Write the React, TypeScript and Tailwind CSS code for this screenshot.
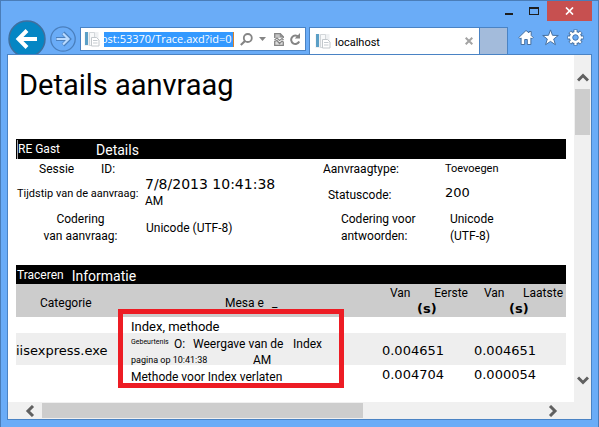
import React from "react";

function PageIcon() {
  return (
    <svg width="16" height="16" viewBox="0 0 16 16" className="shrink-0" aria-hidden="true">
      <rect x="0.5" y="1" width="14" height="14" fill="#eef0f2" />
      <rect x="1" y="1" width="3" height="13" fill="#5b9fc6" />
      <path d="M5.5 1.5h5v13h-5z" fill="#f8f9fa" stroke="#d3d7da" />
      <path d="M7.500 6.500h5l2.500 2.500v6h-7.500z" fill="#fff" stroke="#c3c8cc" />
      <path d="M9 9.500h4.500M9 12h4.500" stroke="#c5cbd0" />
    </svg>
  );
}

function Chevron({ turn }: { turn: "up" | "down" | "left" | "right" }) {
  const d = {
    up: "M1 9.500 6 4.500 11 9.500",
    down: "M1 3.500 6 8.500 11 3.500",
    left: "M9 1 4 6 9 11",
    right: "M3 1 8 6 3 11",
  }[turn];
  return (
    <svg width="12" height="12" viewBox="0 0 12 12" fill="none" stroke="#606060" strokeWidth="3" aria-hidden="true">
      <path d={d} />
    </svg>
  );
}

function TitleBar() {
  return (
    <div className="flex h-5 justify-end pr-1.5">
      <button aria-label="Minimaliseren" className="flex w-5 items-end justify-end pb-1.5">
        <span className="h-0.5 w-2 bg-[#1e1e1e]" />
      </button>
      <button aria-label="Maximaliseren" className="flex w-[34px] items-center justify-end pr-2">
        <span className="h-2 w-2.5 border border-t-2 border-[#1e1e1e]" />
      </button>
      <button aria-label="Sluiten" className="flex w-[45px] items-center justify-center bg-[#c75050]">
        <svg width="9" height="8" viewBox="0 0 9 8" stroke="#fff" strokeWidth="1.700" aria-hidden="true">
          <path d="M1 0.500 8 7.500M8 0.500 1 7.500" />
        </svg>
      </button>
    </div>
  );
}

function NavBar() {
  return (
    <div className="flex h-8 items-start">
      <div className="flex h-9 shrink-0 items-center gap-1 pl-[7px]">
        <button aria-label="Terug">
          <svg width="38" height="38" viewBox="0 0 38 38" fill="none" aria-hidden="true">
            <circle cx="19" cy="19" r="18" fill="#0586c4" stroke="#3f6f9e" strokeWidth="1.500" />
            <path d="M10 19h19" stroke="#fff" strokeWidth="4" />
            <path d="M19 10.500 10.500 19l8.500 8.500" stroke="#fff" strokeWidth="4" />
          </svg>
        </button>
        <button aria-label="Vooruit">
          <svg width="26" height="26" viewBox="0 0 26 26" fill="none" aria-hidden="true">
            <circle cx="13" cy="13" r="12.200" stroke="#4a7fbd" strokeWidth="1.300" />
            <path d="M6 13h12M13 7l6 6-6 6" stroke="#4a7fbd" strokeWidth="4" />
            <path d="M6.500 13h11.500M13 7.500l5.500 5.500-5.500 5.500" stroke="#b9daff" strokeWidth="2.200" />
          </svg>
        </button>
      </div>
      <div className="ml-1 mt-1.5 flex h-6 w-[226px] shrink-0 items-center border border-[#4a83c4] bg-white pl-[3px]">
        <PageIcon />
        <input
          aria-label="Adres"
          readOnly
          value="ost:53370/Trace.axd?id=0"
          className="ml-1 h-[15px] w-[130px] border-r border-[#d9822b] bg-[#3399ff] -indent-[3px] font-['Open_Sans',sans-serif] text-[11px] text-white outline-none"
        />
        <button aria-label="Zoeken" className="ml-1.5">
          <svg width="13" height="13" viewBox="0 0 13 13" fill="none" stroke="#858585" aria-hidden="true">
            <circle cx="7.800" cy="5" r="4" strokeWidth="1.800" />
            <path d="M5 8 0.800 12" strokeWidth="2.200" />
          </svg>
        </button>
        <button aria-label="Adressen tonen" className="ml-1.5">
          <svg width="7" height="4" viewBox="0 0 7 4" fill="#858585" aria-hidden="true">
            <path d="M0 0h7L3.500 4z" />
          </svg>
        </button>
        <button aria-label="Compatibiliteit" className="ml-2">
          <svg width="10" height="13" viewBox="0 0 10 13" fill="none" stroke="#858585" aria-hidden="true">
            <path d="M0.700 5V0.700h5.600l3 3V5" fill="#c4c4c4" strokeWidth="1.300" />
            <path d="M6.300 0.700v3h3" />
            <path d="M0.500 7 3 5l2.500 2.500L8 5.500l1.500 1.500" strokeWidth="1.300" />
            <path d="M0.700 8.500v3.800h8.600V9L8 8 5.500 10.500 3 7.500z" fill="#ddd" strokeWidth="1.300" />
          </svg>
        </button>
        <button aria-label="Vernieuwen" className="ml-1.5">
          <svg width="11" height="13" viewBox="0 0 11 13" fill="none" stroke="#858585" aria-hidden="true">
            <path d="M8.500 4A4.200 4.200 0 1 0 9.200 8.500" strokeWidth="2" />
            <path d="M10 0v5.500H4.800z" fill="#858585" stroke="none" />
          </svg>
        </button>
      </div>
      <div className="ml-[3px] mt-1.5 flex h-[27px] min-w-0 flex-1 items-center border border-b-0 border-[#4a83c4] bg-white pl-[5px] pr-1.5">
        <PageIcon />
        <span className="ml-1 mt-1 flex-1 text-[11px]">localhost</span>
        <button aria-label="Tabblad sluiten">
          <svg width="8" height="8" viewBox="0 0 8 8" stroke="#a3a3a3" strokeWidth="2" aria-hidden="true">
            <path d="M0.700 0.700 7.300 7.300M7.300 0.700 0.700 7.300" />
          </svg>
        </button>
      </div>
      <button aria-label="Nieuw tabblad" className="mt-1.5 h-[27px] w-7 border border-b-0 border-l-0 border-[#4a83c4] bg-[#a3bbdb]" />
      <div className="mt-2 flex w-[90px] shrink-0 items-center gap-2 pl-2.5">
        <button aria-label="Startpagina">
          <svg width="16" height="17" viewBox="0 0 16 17" fill="#fff" stroke="#456f9f" strokeWidth="1" aria-hidden="true">
            <path d="M8 1.500 0.800 8.500l1.300 1.300 1-.9V15.500h3.600v-5h2.600v5h3.600V8.900l1 .9 1.300-1.300-2-2V2.500h-2.200v1.300z" />
          </svg>
        </button>
        <button aria-label="Favorieten">
          <svg width="17" height="17" viewBox="0 0 17 17" fill="#fff" stroke="#456f9f" strokeWidth="1" aria-hidden="true">
            <path d="M8.500 0.900 10.500 6.300l5.800.2-4.600 3.500 1.700 5.700-4.900-3.300-4.900 3.300 1.700-5.700L.7 6.500l5.800-.2z" />
          </svg>
        </button>
        <button aria-label="Extra">
          <svg width="17" height="17" viewBox="0 0 17 17" fill="none" aria-hidden="true">
            <g stroke="#456f9f" strokeWidth="4">
              <path d="M8.500.5v16M.5 8.500h16M2.800 2.800l11.400 11.400M14.200 2.800 2.800 14.200" />
              <circle cx="8.500" cy="8.500" r="4.300" strokeWidth="4.500" />
            </g>
            <g stroke="#fff" strokeWidth="2.200">
              <path d="M8.500 1v3M8.500 13v3M1 8.500h3M13 8.500h3M3.200 3.200l2 2M11.800 11.800l2 2M13.800 3.200l-2 2M5.200 11.800l-2 2" />
            </g>
            <circle cx="8.500" cy="8.500" r="4.300" fill="#6aacf7" stroke="#fff" strokeWidth="2.600" />
            <circle cx="8.500" cy="8.500" r="2.700" fill="#6aacf7" stroke="#456f9f" strokeWidth="0.800" />
          </svg>
        </button>
      </div>
    </div>
  );
}

const mono = "font-['DejaVu_Sans',sans-serif] text-[13px]";

function RequestDetails() {
  return (
    <table className="mt-9 w-full table-fixed border-collapse text-left leading-[17px]">
      <colgroup>
        <col className="w-[129px]" />
        <col />
        <col className="w-[122px]" />
        <col className="w-[121px]" />
      </colgroup>
      <thead>
        <tr className="h-5 bg-black text-white">
          <th colSpan={4} className="p-0 pl-px font-normal">
            <div className="flex items-center gap-9 border-l border-[#aaaaaa]">
              <span>RE Gast</span>
              <span className="pt-0.5 text-[14px]">Details</span>
            </div>
          </th>
        </tr>
      </thead>
      <tbody className="align-top">
        <tr className="h-[17px]">
          <th className="p-0 pl-[23px] pt-[3px] font-normal leading-[14px]">
            <span className="inline-block w-[62px]">Sessie</span>
            <span>ID:</span>
          </th>
          <td />
          <th className="p-0 pt-[3px] font-normal leading-[14px]">Aanvraagtype:</th>
          <td className="p-0 pt-[3px] text-[11px] leading-[14px]">Toevoegen</td>
        </tr>
        <tr className="h-[35px]">
          <th className="whitespace-nowrap p-0 pl-px align-middle text-[11px] font-normal">Tijdstip van de aanvraag:</th>
          <td className="p-0">
            <div className="font-['DejaVu_Sans',sans-serif] text-[14px]">7/8/2013 10:41:38</div>
            <div>AM</div>
          </td>
          <th className="p-0 pl-[5px] pt-1 align-middle font-normal">Statuscode:</th>
          <td className={"p-0 pt-2 " + mono}>200</td>
        </tr>
        <tr className="h-[34px]">
          <th className="p-0 text-center font-normal">
            Codering
            <br />
            van aanvraag:
          </th>
          <td className="p-0 pl-px align-middle">Unicode (UTF-8)</td>
          <th className="p-0 pl-[18px] font-normal">
            Codering voor
            <br />
            antwoorden:
          </th>
          <td className="p-0 pl-[5px]">
            Unicode
            <br />
            (UTF-8)
          </td>
        </tr>
      </tbody>
    </table>
  );
}

function TraceInformation() {
  return (
    <div className="relative mt-5">
      <table className="w-full table-fixed border-collapse whitespace-nowrap text-left leading-4">
        <colgroup>
          <col className="w-[115px]" />
          <col />
          <col className="w-[92px]" />
          <col className="w-[92px]" />
        </colgroup>
        <thead>
          <tr className="h-[19px] bg-black text-white">
            <th colSpan={4} className="p-0 pl-px font-normal">
              <div className="flex items-center gap-2">
                <span>Traceren</span>
                <span className="pt-0.5 text-[14px]">Informatie</span>
              </div>
            </th>
          </tr>
          <tr className="h-[33px] bg-[#cccccc]">
            <th className="p-0 pl-6 pt-1 font-normal">Categorie</th>
            <th className="p-0 pl-[94px] pt-1 font-normal">
              <span className="inline-block w-[47px]">Mesa e</span>
              <span>_</span>
            </th>
            <th className="p-0 font-normal">
              <div className="flex justify-between pl-2 pr-1.5 pt-0.5 leading-[15px]">
                <span>Van</span>
                <span>Eerste</span>
              </div>
              <div className={"pl-[35px] font-bold " + mono}>(s)</div>
            </th>
            <th className="p-0 font-normal">
              <div className="flex justify-between pl-2.5 pr-[3px] pt-0.5 leading-[15px]">
                <span>Van</span>
                <span>Laatste</span>
              </div>
              <div className={"pl-[35px] font-bold " + mono}>(s)</div>
            </th>
          </tr>
        </thead>
        <tbody>
          <tr className="h-4">
            <td />
            <td className="p-0">
              <div className="flex h-4 items-end text-[13px] leading-3">Index, methode</div>
            </td>
            <td />
            <td />
          </tr>
          <tr className="h-8 bg-[#eeeeee]">
            <td className={"p-0 pt-1 " + mono}>iisexpress.exe</td>
            <td className="p-0">
              <div className="flex h-4 items-center pt-1.5">
                <span className="w-[43px] self-start text-[7px] leading-[7px]">Gebeurtenis</span>
                <span className="w-[19px]">O:</span>
                <span className="w-[100px]">Weergave van de</span>
                <span>Index</span>
              </div>
              <div className="flex h-4 items-center pt-1.5">
                <span className="w-[122px] text-[9px]">pagina op 10:41:38</span>
                <span>AM</span>
              </div>
            </td>
            <td className={"p-0 pt-1 " + mono}>0.004651</td>
            <td className={"p-0 pt-1 " + mono}>0.004651</td>
          </tr>
          <tr>
            <td />
            <td className="p-0 pt-1">Methode voor Index verlaten</td>
            <td className={"p-0 " + mono}>0.004704</td>
            <td className={"p-0 " + mono}>0.000054</td>
          </tr>
        </tbody>
      </table>
      <div className="absolute left-[102px] top-11 h-[79px] w-[226px] border-5 border-[#ed1c24]" />
    </div>
  );
}

export default function App() {
  return (
    <div className="border border-[#4a7db8] bg-[#6aacf7] pb-[7px] font-[Roboto,sans-serif] text-[12px] text-black">
      <TitleBar />
      <NavBar />
      <div className="relative mx-[6px] mt-px border border-[#4a83c4] bg-white">
        <div className="flex">
          <main className="min-w-0 flex-1 px-2 pb-[17px] pt-3">
            <h1 className="pl-[3px] text-[29px] leading-9">Details aanvraag</h1>
            <RequestDetails />
            <TraceInformation />
          </main>
          <div className="flex w-[17px] shrink-0 flex-col items-center bg-[#f0f0f0]">
            <button aria-label="Omhoog" className="flex h-[34px] items-end pb-1.5">
              <Chevron turn="up" />
            </button>
            <div className="h-[46px] w-[15px] bg-[#cdcdcd]" />
            <button aria-label="Omlaag" className="mt-auto flex h-8 items-start pt-1">
              <Chevron turn="down" />
            </button>
          </div>
        </div>
        <div className="flex h-[17px] items-center bg-[#f0f0f0]">
          <button aria-label="Naar links" className="flex w-[34px] justify-end pr-1.5">
            <Chevron turn="left" />
          </button>
          <div className="h-[15px] w-[55%] bg-[#cdcdcd]" />
          <button aria-label="Naar rechts" className="ml-auto flex w-11">
            <Chevron turn="right" />
          </button>
        </div>
      </div>
    </div>
  );
}
